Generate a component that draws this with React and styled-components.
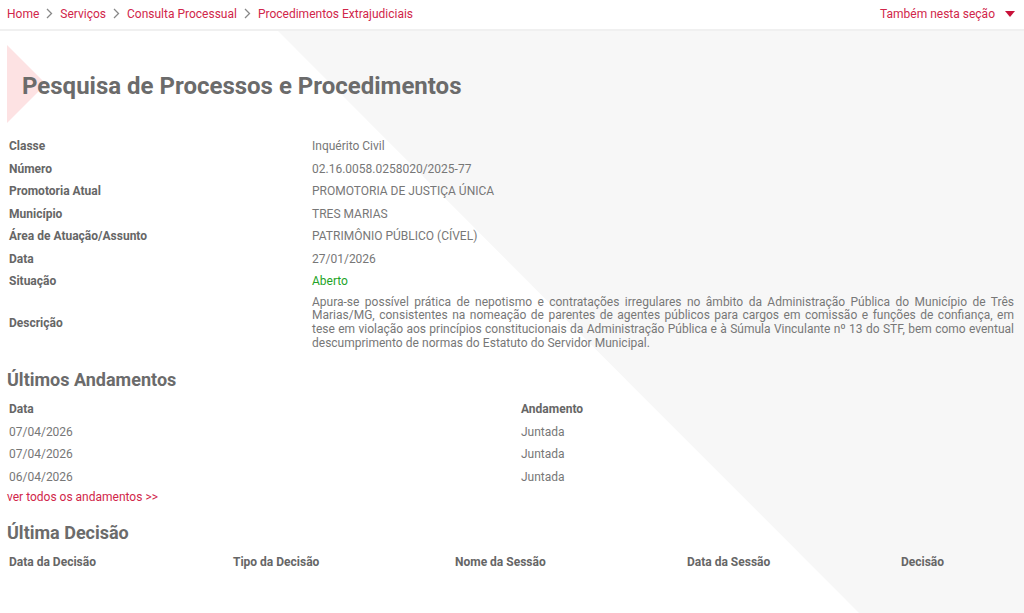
import React from "react";
import styled, { createGlobalStyle } from "styled-components";

const GlobalStyle = createGlobalStyle`
  html, body {
    margin: 0;
    padding: 0;
    background: #fff;
    font-family: Roboto, "Liberation Sans", Arial, sans-serif;
  }
`;

const Page = styled.div`
  width: 1024px;
  height: 613px;
  overflow: hidden;
`;

const Header = styled.header`
  height: 31px;
  display: flex;
  align-items: center;
  justify-content: space-between;
  padding: 0 9px 2px 7px;
  border-bottom: 2px solid #f0f0f0;
  background: #fff;
  box-sizing: border-box;
`;

const Crumbs = styled.nav`
  display: flex;
  align-items: center;
  gap: 6px;
  font-size: 12px;
`;

const Crumb = styled.a`
  color: #d1264a;
  text-decoration: none;
`;

const Sep = styled.span`
  display: flex;
  align-items: center;
  color: #888;
`;

const Section = styled.div`
  display: flex;
  align-items: center;
  gap: 10px;
  color: #d1264a;
  font-size: 12px;
`;

const Main = styled.main`
  position: relative;
  min-height: 582px;
  padding: 0 7px;
  box-sizing: border-box;

  &::before {
    content: "";
    position: absolute;
    inset: 0;
    background: #f7f7f7;
    clip-path: polygon(278px 0, 100% 0, 100% 100%, 859px 100%);
    z-index: 0;
  }
`;

const Content = styled.div`
  position: relative;
  z-index: 1;
`;

const TitleWrap = styled.div`
  position: relative;
  height: 104px;
  display: flex;
  align-items: center;
  padding-left: 15px;

  &::before {
    content: "";
    position: absolute;
    left: 0;
    top: 14px;
    width: 0;
    height: 0;
    border-top: 39px solid transparent;
    border-bottom: 39px solid transparent;
    border-left: 39px solid #fde2e3;
  }
`;

const Title = styled.h1`
  position: relative;
  margin: 5px 0 0;
  font-size: 24px;
  font-weight: 700;
  color: #6b6b6b;
`;

const Details = styled.div`
  display: grid;
  grid-template-columns: 303px 1fr;
  align-items: center;
  font-size: 12px;
  padding-left: 2px;
`;

const Label = styled.div`
  font-weight: 700;
  color: #666;
  line-height: 22.5px;
`;

const Value = styled.div`
  color: ${(p) => (p.$green ? "#23a327" : "#777")};
  line-height: ${(p) => (p.$multi ? "13.9px" : "22.5px")};
  text-align: ${(p) => (p.$multi ? "justify" : "left")};
  padding: ${(p) => (p.$multi ? "3px 3px 2px 0" : "0")};
  word-spacing: ${(p) => (p.$multi ? "0.2px" : "normal")};
`;

const Heading = styled.h2`
  margin: 16px 0 8px;
  font-size: 18px;
  font-weight: 700;
  color: #6b6b6b;
`;

const Table = styled.div`
  display: grid;
  grid-template-columns: ${(p) => p.$cols};
  font-size: 12px;
  padding-left: 2px;
`;

const Th = styled.div`
  font-weight: 700;
  color: #666;
  line-height: 22.5px;
`;

const Td = styled.div`
  color: #777;
  line-height: 22.5px;
`;

const MoreLink = styled.a`
  display: block;
  color: #d1264a;
  font-size: 12px;
  text-decoration: none;
  line-height: 18px;
`;

const Chevron = () => (
  <svg width="9" height="11" viewBox="0 0 9 11" fill="none">
    <path d="M2 1l4.5 4.5L2 10" stroke="#888" strokeWidth="1.3" />
  </svg>
);

const Caret = () => (
  <svg width="10" height="6" viewBox="0 0 10 6">
    <path d="M0 0h10L5 6z" fill="#c8123a" />
  </svg>
);

const details = [
  ["Classe", "Inquérito Civil"],
  ["Número", "02.16.0058.0258020/2025-77"],
  ["Promotoria Atual", "PROMOTORIA DE JUSTIÇA ÚNICA"],
  ["Município", "TRES MARIAS"],
  ["Área de Atuação/Assunto", "PATRIMÔNIO PÚBLICO (CÍVEL)"],
  ["Data", "27/01/2026"],
  ["Situação", "Aberto"],
  [
    "Descrição",
    "Apura-se possível prática de nepotismo e contratações irregulares no âmbito da Administração Pública do Município de Três Marias/MG, consistentes na nomeação de parentes de agentes públicos para cargos em comissão e funções de confiança, em tese em violação aos princípios constitucionais da Administração Pública e à Súmula Vinculante nº 13 do STF, bem como eventual descumprimento de normas do Estatuto do Servidor Municipal.",
  ],
];

const andamentos = [
  ["07/04/2026", "Juntada"],
  ["07/04/2026", "Juntada"],
  ["06/04/2026", "Juntada"],
];

const crumbs = ["Home", "Serviços", "Consulta Processual", "Procedimentos Extrajudiciais"];

export default function App() {
  return (
    <Page>
      <GlobalStyle />
      <Header>
        <Crumbs>
          {crumbs.map((c, i) => (
            <React.Fragment key={c}>
              {i > 0 && (
                <Sep>
                  <Chevron />
                </Sep>
              )}
              <Crumb href="#">{c}</Crumb>
            </React.Fragment>
          ))}
        </Crumbs>
        <Section>
          Também nesta seção
          <Caret />
        </Section>
      </Header>
      <Main>
        <Content>
          <TitleWrap>
            <Title>Pesquisa de Processos e Procedimentos</Title>
          </TitleWrap>
          <Details>
            {details.map(([k, v]) => (
              <React.Fragment key={k}>
                <Label>{k}</Label>
                <Value $green={k === "Situação"} $multi={k === "Descrição"}>
                  {v}
                </Value>
              </React.Fragment>
            ))}
          </Details>

          <Heading>Últimos Andamentos</Heading>
          <Table $cols="512px 1fr">
            <Th>Data</Th>
            <Th>Andamento</Th>
            {andamentos.map(([d, a], i) => (
              <React.Fragment key={i}>
                <Td>{d}</Td>
                <Td>{a}</Td>
              </React.Fragment>
            ))}
          </Table>
          <MoreLink href="#">ver todos os andamentos &gt;&gt;</MoreLink>

          <Heading>Última Decisão</Heading>
          <Table $cols="224px 222px 232px 214px 1fr">
            <Th>Data da Decisão</Th>
            <Th>Tipo da Decisão</Th>
            <Th>Nome da Sessão</Th>
            <Th>Data da Sessão</Th>
            <Th>Decisão</Th>
          </Table>
        </Content>
      </Main>
    </Page>
  );
}
